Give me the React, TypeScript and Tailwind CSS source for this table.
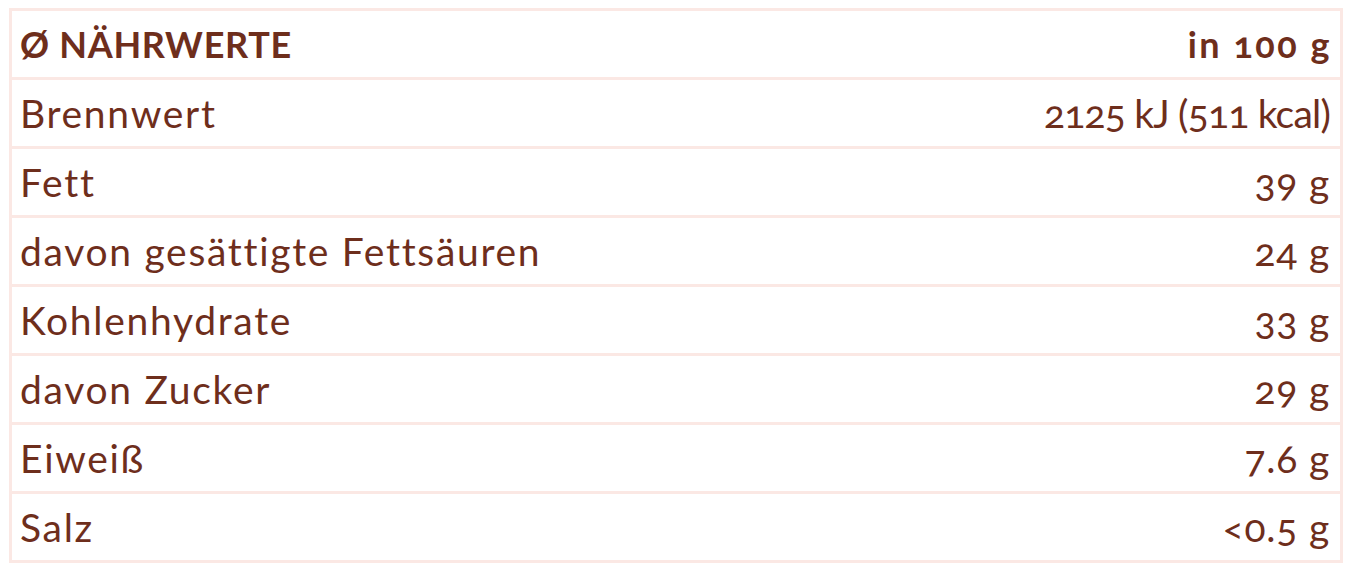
const rows: [string, string][] = [
  ["Brennwert", "2125 kJ (511 kcal)"],
  ["Fett", "39 g"],
  ["davon gesättigte Fettsäuren", "24 g"],
  ["Kohlenhydrate", "33 g"],
  ["davon Zucker", "29 g"],
  ["Eiweiß", "7.6 g"],
  ["Salz", "<0.5 g"],
];

export default function App() {
  return (
    <div className="w-[1354px] h-[572px] bg-white pt-[8px] pl-[9px] font-['Lato',sans-serif] text-[#6e2e1c] oldstyle-nums [font-variant-ligatures:none]">
      <div className="w-[1334px] border-[3px] border-[#fbe8e4]">
        <div className="h-[66px] flex items-center justify-between pl-[8px] pr-[10px] text-[36px] font-bold">
          <span className="tracking-[0.7px]">Ø NÄHRWERTE</span>
          <span className="tracking-[2.5px] -mr-[2px]">in 100 g</span>
        </div>
        {rows.map(([label, value], i) => (
          <div
            key={label}
            className="h-[69px] border-t-[3px] border-[#fbe8e4] flex items-center justify-between pl-[8px] pr-[10px] text-[39px]"
          >
            <span className="tracking-[1.7px]">{label}</span>
            <span className={i === 0 ? "tracking-[-0.8px]" : "tracking-[0.8px]"}>{value}</span>
          </div>
        ))}
      </div>
    </div>
  );
}
